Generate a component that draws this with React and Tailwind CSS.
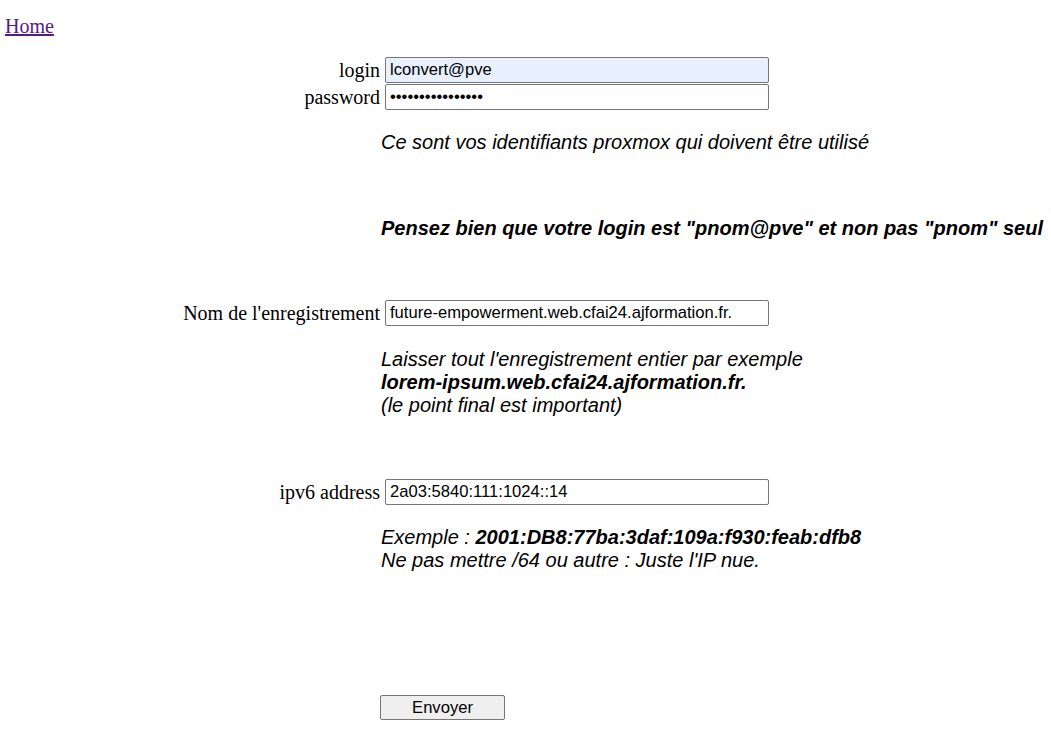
import React from 'react';

const serif = "font-['Liberation_Serif','Times_New_Roman',serif]";
const sans = "font-['Liberation_Sans',Arial,sans-serif]";

const Field = ({ label, value, type = 'text', autofill = false }) => (
  <div className="flex items-center h-[27px]">
    <label className={`${serif} w-[381px] pr-[1px] text-right text-[20px] text-black`}>{label}</label>
    <input
      type={type}
      defaultValue={value}
      className={`${sans} ml-[4px] w-[384px] h-[26px] border border-[#767676] rounded-[2px] px-[4px] text-[16.6px] text-black outline-none ${autofill ? 'bg-[#e8f0fe]' : 'bg-white'}`}
    />
  </div>
);

const Note = ({ children, className = '' }) => (
  <div className={`${sans} ml-[381px] italic text-[20px] leading-[23px] text-black ${className}`}>{children}</div>
);

export default function App() {
  return (
    <div className="min-h-screen bg-white relative">
      <div className="pl-[5px] pt-[14px]">
        <a href="#" className={`${serif} text-[20px] leading-[24px] text-[#551a8b] underline`}>Home</a>
      </div>

      <form className="pt-[17px]" onSubmit={(e) => e.preventDefault()}>
        <Field label="login" value="lconvert@pve" autofill />
        <Field label="password" value="0123456789abcdef" type="password" />

        <Note className="mt-[21px]">Ce sont vos identifiants proxmox qui doivent être utilisé</Note>
        <Note className="mt-[63px] font-bold">Pensez bien que votre login est "pnom@pve" et non pas "pnom" seul</Note>

        <div className="mt-[59px]">
          <Field label="Nom de l'enregistrement" value="future-empowerment.web.cfai24.ajformation.fr." />
        </div>

        <Note className="mt-[22px]">
          Laisser tout l'enregistrement entier par exemple
          <br />
          <b>lorem-ipsum.web.cfai24.ajformation.fr.</b>
          <br />
          (le point final est important)
        </Note>

        <div className="mt-[61px]">
          <Field label="ipv6 address" value="2a03:5840:111:1024::14" />
        </div>

        <Note className="mt-[21px]">
          Exemple : <b>2001:DB8:77ba:3daf:109a:f930:feab:dfb8</b>
          <br />
          Ne pas mettre /64 ou autre : Juste l'IP nue.
        </Note>

        <div className="ml-[380px] mt-[123px]">
          <button
            type="submit"
            className={`${sans} w-[125px] h-[25px] bg-[#efefef] border border-[#767676] rounded-[2px] text-[16.6px] text-black`}
          >
            Envoyer
          </button>
        </div>
      </form>
    </div>
  );
}
